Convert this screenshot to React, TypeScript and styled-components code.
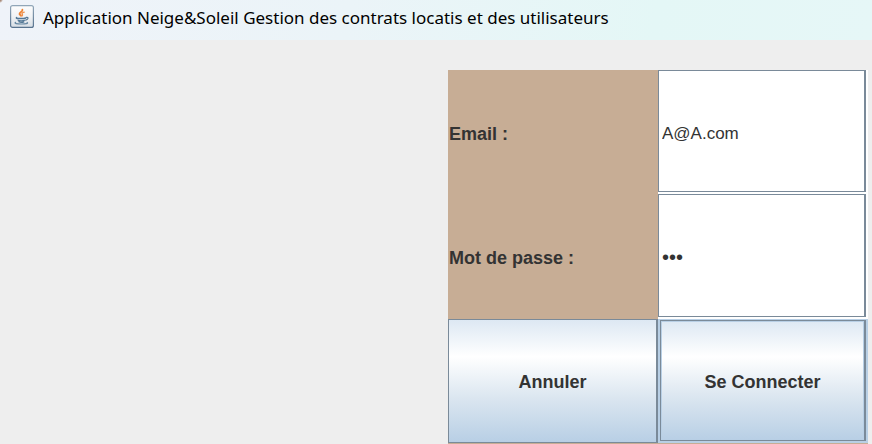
import React from "react";
import styled, { createGlobalStyle, css } from "styled-components";

const GlobalStyle = createGlobalStyle`
  * { box-sizing: border-box; }
  body { margin: 0; background: #eeeeee; }
`;

const Window = styled.div`
  min-height: 100vh;
  display: flex;
  flex-direction: column;
  background: #eeeeee;
  color: #333333;
  font-family: "Liberation Sans", Arial, sans-serif;
`;

const TitleBar = styled.header`
  height: 40px;
  flex: none;
  display: flex;
  align-items: center;
  gap: 9px;
  padding: 0 10px 6px;
  background:
    radial-gradient(circle at 0 0, #a98b78 1px, transparent 3px),
    linear-gradient(100deg, #eff3f9 0%, #ebf4f8 40%, #e4f7f6 75%, #e6f7f7 100%);
`;

const Title = styled.h1`
  margin: 0;
  padding-top: 2px;
  color: #000000;
  font-family: "Segoe UI", "Noto Sans", sans-serif;
  font-size: 17px;
  font-weight: 400;
  line-height: 24px;
  white-space: nowrap;
`;

const Content = styled.main`
  flex: 1;
  display: grid;
  grid-template-columns: minmax(0, 448fr) minmax(0, 420fr);
  padding: 30px 4px 0 0;
`;

const LoginForm = styled.form`
  grid-column: 2;
  display: grid;
  grid-template-columns: repeat(2, minmax(0, 1fr));
  grid-auto-rows: minmax(120px, 1fr);
  padding-bottom: 1px;
  background: #c7ad95;
`;

const Label = styled.label`
  display: flex;
  align-items: center;
  padding: 4px 0 0 1px;
  font-size: 18px;
  font-weight: 700;
`;

const FieldFrame = styled.div`
  display: flex;
  padding: 0 2px 2px 0;
  background: #ffffff;
`;

const Field = styled.input`
  flex: 1;
  min-width: 0;
  margin: 0;
  padding: 5px 2px 0 3px;
  border: 1px solid #7a8a99;
  border-right-width: 2px;
  border-radius: 0;
  outline: none;
  background: #ffffff;
  color: #333333;
  font-family: inherit;
  font-size: ${({ type }) => (type === "password" ? "20px" : "17px")};
`;

const buttonFace = "linear-gradient(#dde8f3 0%, #ffffff 30%, #dbe6f0 64%, #b8cfe5 100%)";

const ButtonFrame = styled.div<{ $default?: boolean }>`
  display: flex;
  ${({ $default }) =>
    $default &&
    css`
      padding: 1px 2px 2px;
      background: #b8cfe5;
    `}
`;

const Button = styled.button<{ $default?: boolean }>`
  flex: 1;
  margin: 0;
  padding: 4px 0 0;
  border: 1px solid #7a8a99;
  border-right-width: 2px;
  border-radius: 0;
  background: ${buttonFace};
  box-shadow: ${({ $default }) => ($default ? "inset 0 0 0 1px #b8cfe5" : "none")};
  color: #333333;
  font-family: inherit;
  font-size: 18px;
  font-weight: 700;
`;

const JavaIcon = () => (
  <svg width="24" height="24" viewBox="0 0 24 24" aria-hidden="true">
    <defs>
      <linearGradient id="tile" x1="0" y1="0" x2="0" y2="1">
        <stop offset="0" stopColor="#fdfdfd" />
        <stop offset="0.5" stopColor="#f1f3f5" />
        <stop offset="1" stopColor="#d6dde4" />
      </linearGradient>
      <linearGradient id="edge" x1="0" y1="0" x2="0" y2="1">
        <stop offset="0" stopColor="#91a6b8" />
        <stop offset="1" stopColor="#58738f" />
      </linearGradient>
    </defs>
    <rect x="0.6" y="0.6" width="22.8" height="21.8" rx="2" fill="url(#tile)" stroke="url(#edge)" strokeWidth="1.2" />
    <g fill="none" strokeLinecap="round" strokeLinejoin="round">
      <path d="M12.4 4.6c.8 1.9-3.1 2.5-2.9 4.2.1 1 1.2 1.2 1.6 2" stroke="#ed8131" strokeWidth="1.8" />
      <path d="M14.2 7.2c-1.8.5-2.5 1.1-2 2 .4.6.5 1 0 1.5" stroke="#ee8f49" strokeWidth="1.4" />
      <path d="M6.6 12.6c-.9.8 1.4 1 4.6 1 2.2 0 3.7-.2 4.5-.6" stroke="#547896" strokeWidth="1.5" />
      <path d="M16.4 12.4c2.4-.4 2.1 2-.7 2.7" stroke="#547896" strokeWidth="1.1" />
      <path d="M8 15.1c.8.9 5.1.9 6.6.2M8.8 16.8c1.2.6 3.9.6 5.1.1" stroke="#547896" strokeWidth="1.2" />
      <path d="M5.6 17.4c-2 1 1.4 1.6 5.9 1.6 4 0 7.3-.6 5.6-1.5" stroke="#6788a3" strokeWidth="1.2" />
    </g>
  </svg>
);

export default function App() {
  return (
    <Window>
      <GlobalStyle />
      <TitleBar>
        <JavaIcon />
        <Title>Application Neige&amp;Soleil Gestion des contrats locatis et des utilisateurs</Title>
      </TitleBar>
      <Content>
        <LoginForm onSubmit={(event: React.FormEvent) => event.preventDefault()}>
          <Label htmlFor="email">Email :</Label>
          <FieldFrame>
            <Field id="email" type="text" defaultValue="A@A.com" />
          </FieldFrame>
          <Label htmlFor="password">Mot de passe :</Label>
          <FieldFrame>
            <Field id="password" type="password" defaultValue="123" />
          </FieldFrame>
          <ButtonFrame>
            <Button type="reset">Annuler</Button>
          </ButtonFrame>
          <ButtonFrame $default>
            <Button type="submit" $default>Se Connecter</Button>
          </ButtonFrame>
        </LoginForm>
      </Content>
    </Window>
  );
}
